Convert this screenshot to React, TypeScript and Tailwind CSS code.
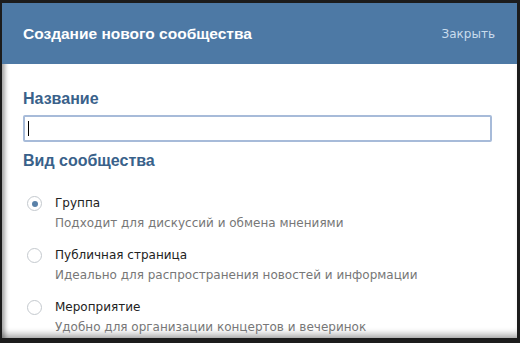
import React from "react";

const options = [
  { title: "Группа", desc: "Подходит для дискуссий и обмена мнениями", checked: true },
  { title: "Публичная страница", desc: "Идеально для распространения новостей и информации", checked: false },
  { title: "Мероприятие", desc: "Удобно для организации концертов и вечеринок", checked: false },
];

const Radio = ({ checked }: { checked: boolean }) => (
  <span className="mt-[2px] flex h-[15px] w-[15px] shrink-0 items-center justify-center rounded-full border border-[#c4c9ce] bg-white">
    {checked && <span className="h-[6px] w-[6px] rounded-full bg-[#5a81a8]" />}
  </span>
);

const heading = "text-[16px] font-bold leading-[20px] text-[#39618a] font-['Liberation_Sans',Arial,sans-serif]";

export default function App() {
  return (
    <div
      className="h-[343px] w-[520px] overflow-hidden bg-[#1c1c1c] pb-[5px] pl-[2px] pr-[3px] pt-[3px]"
      style={{ fontFamily: "'DejaVu Sans', Verdana, sans-serif" }}
    >
      <div className="flex h-full flex-col bg-white shadow-[inset_5px_0_4px_-2px_rgba(0,0,0,0.35),inset_0_-8px_6px_-4px_rgba(0,0,0,0.3)]">
        <div className="flex h-[61px] shrink-0 items-center justify-between bg-[#4d79a5] pl-[21px] pr-[22px]">
          <span className="font-['Liberation_Sans',Arial,sans-serif] text-[15.5px] font-bold text-white">Создание нового сообщества</span>
          <span className="text-[12px] text-[#c9dced]">Закрыть</span>
        </div>
        <div className="flex flex-col pl-[21px] pr-[25px] pt-[25px]">
          <div className={heading}>Название</div>
          <div className="mt-[6px] flex h-[27px] items-center rounded-[2px] border-2 border-[#a7bbd9] bg-white px-[3px]">
            <span className="h-[15px] w-[1px] bg-black" />
          </div>
          <div className={`mt-[9px] ${heading}`}>Вид сообщества</div>
          <div className="mt-[23px] flex flex-col gap-[12px] pl-[4px]">
            {options.map((o) => (
              <div key={o.title} className="flex gap-[13px]">
                <Radio checked={o.checked} />
                <div className="flex flex-col">
                  <span className="text-[12px] leading-[18px] text-[#222]">{o.title}</span>
                  <span className="text-[12px] leading-[22px] text-[#777]">{o.desc}</span>
                </div>
              </div>
            ))}
          </div>
        </div>
      </div>
    </div>
  );
}
